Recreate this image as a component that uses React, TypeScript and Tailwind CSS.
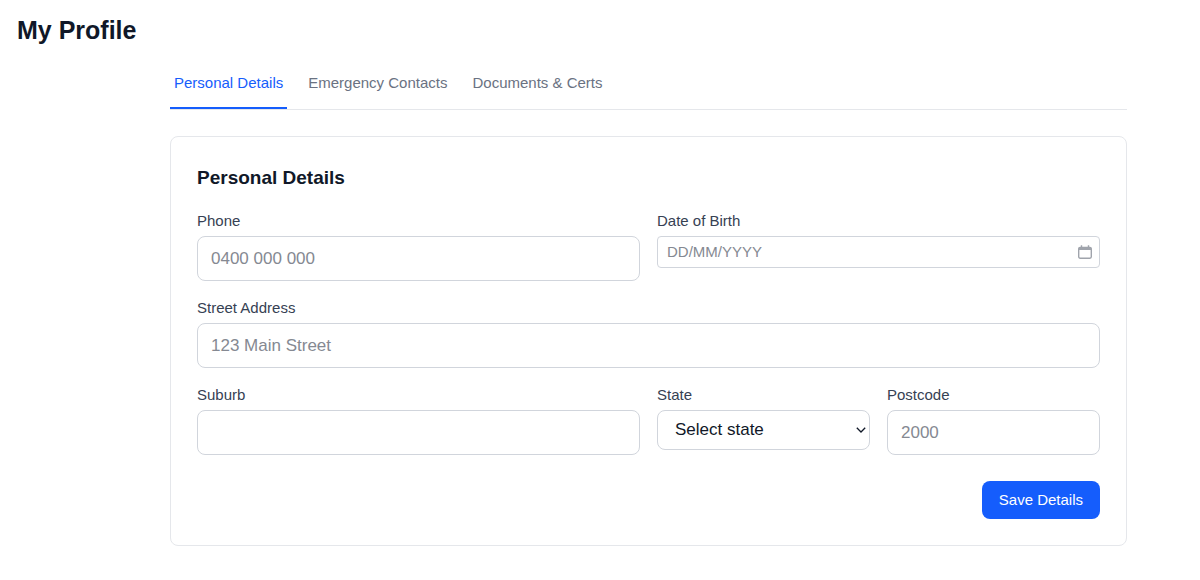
import { useState } from "react";
import type { FormEvent, ReactNode } from "react";
import clsx from "clsx";

const tabs = [
  { id: "personal", label: "Personal Details" },
  { id: "emergency", label: "Emergency Contacts" },
  { id: "documents", label: "Documents & Certs" },
];

const states = ["ACT", "NSW", "NT", "QLD", "SA", "TAS", "VIC", "WA"];

const inputClass =
  "block h-[45px] w-full rounded-lg border border-gray-300 bg-white px-[13px] text-[17px] text-gray-900 placeholder:text-[#858992] focus:border-blue-600 focus:outline-none";

function CalendarIcon() {
  return (
    <svg aria-hidden="true" className="h-[14px] w-[14px]" fill="none" viewBox="0 0 14 14">
      <rect height="10.8" rx="1.4" stroke="currentColor" strokeWidth="1.4" width="12.6" x="0.7" y="2.4" />
      <path d="M0.7 3.8a1.4 1.4 0 0 1 1.4-1.4h9.8a1.4 1.4 0 0 1 1.4 1.4v1.2H0.7z" fill="currentColor" />
      <path d="M3.5 0.2v2.4M10.5 0.2v2.4" stroke="currentColor" strokeWidth="1.4" />
    </svg>
  );
}

function ChevronIcon() {
  return (
    <svg
      aria-hidden="true"
      className="pointer-events-none absolute top-1/2 right-1 h-[6px] w-[10px] -translate-y-1/2 text-gray-900"
      fill="none"
      viewBox="0 0 10 6"
    >
      <path d="M0.8 0.8L5 5L9.2 0.8" stroke="currentColor" strokeWidth="1.3" />
    </svg>
  );
}

type FieldProps = {
  children: ReactNode;
  className?: string;
  id: string;
  label: string;
};

function Field({ children, className, id, label }: FieldProps) {
  return (
    <div className={className}>
      <label className="mb-1 block text-[15px] leading-[22px] text-gray-700" htmlFor={id}>
        {label}
      </label>
      {children}
    </div>
  );
}

function PersonalDetailsForm() {
  const [dateOfBirth, setDateOfBirth] = useState("");
  const [state, setState] = useState("");

  function handleSubmit(event: FormEvent) {
    event.preventDefault();
  }

  return (
    <form className="rounded-lg border border-gray-200 bg-white p-[26px]" onSubmit={handleSubmit}>
      <h2 className="mb-[17px] text-[19px] leading-[30px] font-bold text-gray-900">Personal Details</h2>
      <div className="grid grid-cols-4 gap-x-[17px] gap-y-4">
        <Field className="col-span-2" id="phone" label="Phone">
          <input className={inputClass} id="phone" placeholder="0400 000 000" type="tel" />
        </Field>
        <Field className="col-span-2" id="dob" label="Date of Birth">
          <div className="flex h-8 items-center rounded border border-gray-300 bg-white pr-[7px] pl-[9px]">
            <input
              className="min-w-0 flex-1 text-[15px] text-gray-900 placeholder:text-[#858992] focus:outline-none"
              id="dob"
              onChange={(event) => setDateOfBirth(event.target.value)}
              placeholder="DD/MM/YYYY"
              type="text"
              value={dateOfBirth}
            />
            <button aria-label="Choose date" className="text-[#a0a4ac]" type="button">
              <CalendarIcon />
            </button>
          </div>
        </Field>
        <Field className="col-span-4" id="street" label="Street Address">
          <input className={inputClass} id="street" placeholder="123 Main Street" type="text" />
        </Field>
        <Field className="col-span-2" id="suburb" label="Suburb">
          <input className={inputClass} id="suburb" type="text" />
        </Field>
        <Field id="state" label="State">
          <div className="relative">
            <select
              className="block h-10 w-full appearance-none rounded-lg border border-gray-300 bg-white px-[17px] text-[17px] text-gray-900 focus:border-blue-600 focus:outline-none"
              id="state"
              onChange={(event) => setState(event.target.value)}
              value={state}
            >
              <option value="">Select state</option>
              {states.map((name) => (
                <option key={name} value={name}>
                  {name}
                </option>
              ))}
            </select>
            <ChevronIcon />
          </div>
        </Field>
        <Field id="postcode" label="Postcode">
          <input className={inputClass} id="postcode" placeholder="2000" type="text" />
        </Field>
      </div>
      <div className="mt-[26px] flex justify-end">
        <button className="h-[38px] rounded-lg bg-blue-600 px-[17px] text-[15px] text-white hover:bg-blue-700" type="submit">
          Save Details
        </button>
      </div>
    </form>
  );
}

export default function App() {
  const [activeTab, setActiveTab] = useState("personal");

  return (
    <main className="min-h-screen bg-white py-[13px] font-['Liberation_Sans',Arial,sans-serif]">
      <h1 className="px-[17px] text-[25px] leading-[34px] font-bold text-gray-900">My Profile</h1>
      <div className="mt-[13px] pl-[97px]">
        <div className="mx-auto max-w-[957px]">
          <nav className="mb-[26px] flex gap-[17px] border-b border-gray-200">
            {tabs.map((tab) => (
              <button
                className={clsx(
                  "h-[49px] border-b-2 px-1 text-[15px]",
                  activeTab === tab.id ? "border-blue-600 text-blue-600" : "border-transparent text-gray-500",
                )}
                key={tab.id}
                onClick={() => setActiveTab(tab.id)}
                type="button"
              >
                {tab.label}
              </button>
            ))}
          </nav>
          <PersonalDetailsForm />
        </div>
      </div>
    </main>
  );
}
